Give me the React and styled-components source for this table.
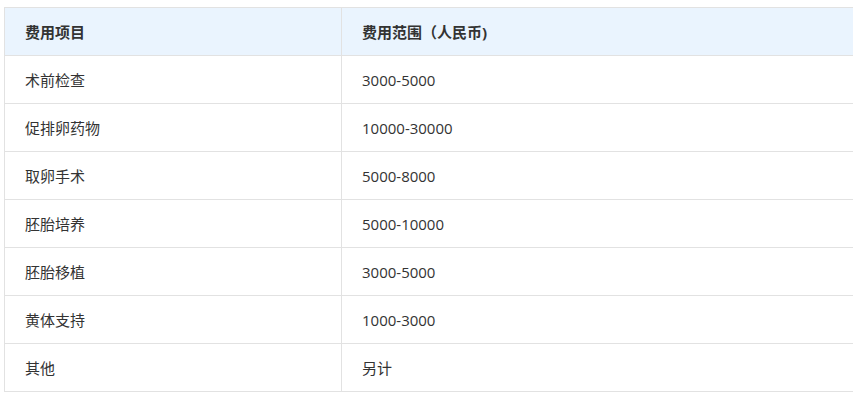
import React from "react";
import styled, { createGlobalStyle } from "styled-components";

const Global = createGlobalStyle`
  html, body { margin: 0; padding: 0; background: #fff; }
  body { font-family: "Open Sans", "Noto Sans CJK SC", "Noto Sans", sans-serif; }
`;

const Page = styled.div`
  width: 853px;
  height: 399px;
  overflow: hidden;
  padding: 7px 0 0 4px;
  box-sizing: border-box;
`;

const Table = styled.table`
  width: 870px;
  border-collapse: collapse;
  table-layout: fixed;
  font-size: 15px;
  color: #333;
`;

const HeadRow = styled.tr`
  background: #eaf4fe;
`;

const Th = styled.th`
  height: 48px;
  padding: 0 20px;
  text-align: left;
  font-weight: bold;
  color: #333;
  border: 1px solid #e2e2e2;
  box-sizing: border-box;
`;

const Td = styled.td`
  height: 48px;
  padding: 0 20px;
  text-align: left;
  border: 1px solid #e2e2e2;
  color: #333;
  box-sizing: border-box;
`;

const FirstCol = styled.col`
  width: 337px;
`;

const rows = [
  ["术前检查", "3000-5000"],
  ["促排卵药物", "10000-30000"],
  ["取卵手术", "5000-8000"],
  ["胚胎培养", "5000-10000"],
  ["胚胎移植", "3000-5000"],
  ["黄体支持", "1000-3000"],
  ["其他", "另计"],
];

export default function App() {
  return (
    <Page>
      <Global />
      <Table>
        <colgroup>
          <FirstCol />
          <col />
        </colgroup>
        <thead>
          <HeadRow>
            <Th>费用项目</Th>
            <Th>费用范围（人民币)</Th>
          </HeadRow>
        </thead>
        <tbody>
          {rows.map(([a, b]) => (
            <tr key={a}>
              <Td>{a}</Td>
              <Td>{b}</Td>
            </tr>
          ))}
        </tbody>
      </Table>
    </Page>
  );
}
